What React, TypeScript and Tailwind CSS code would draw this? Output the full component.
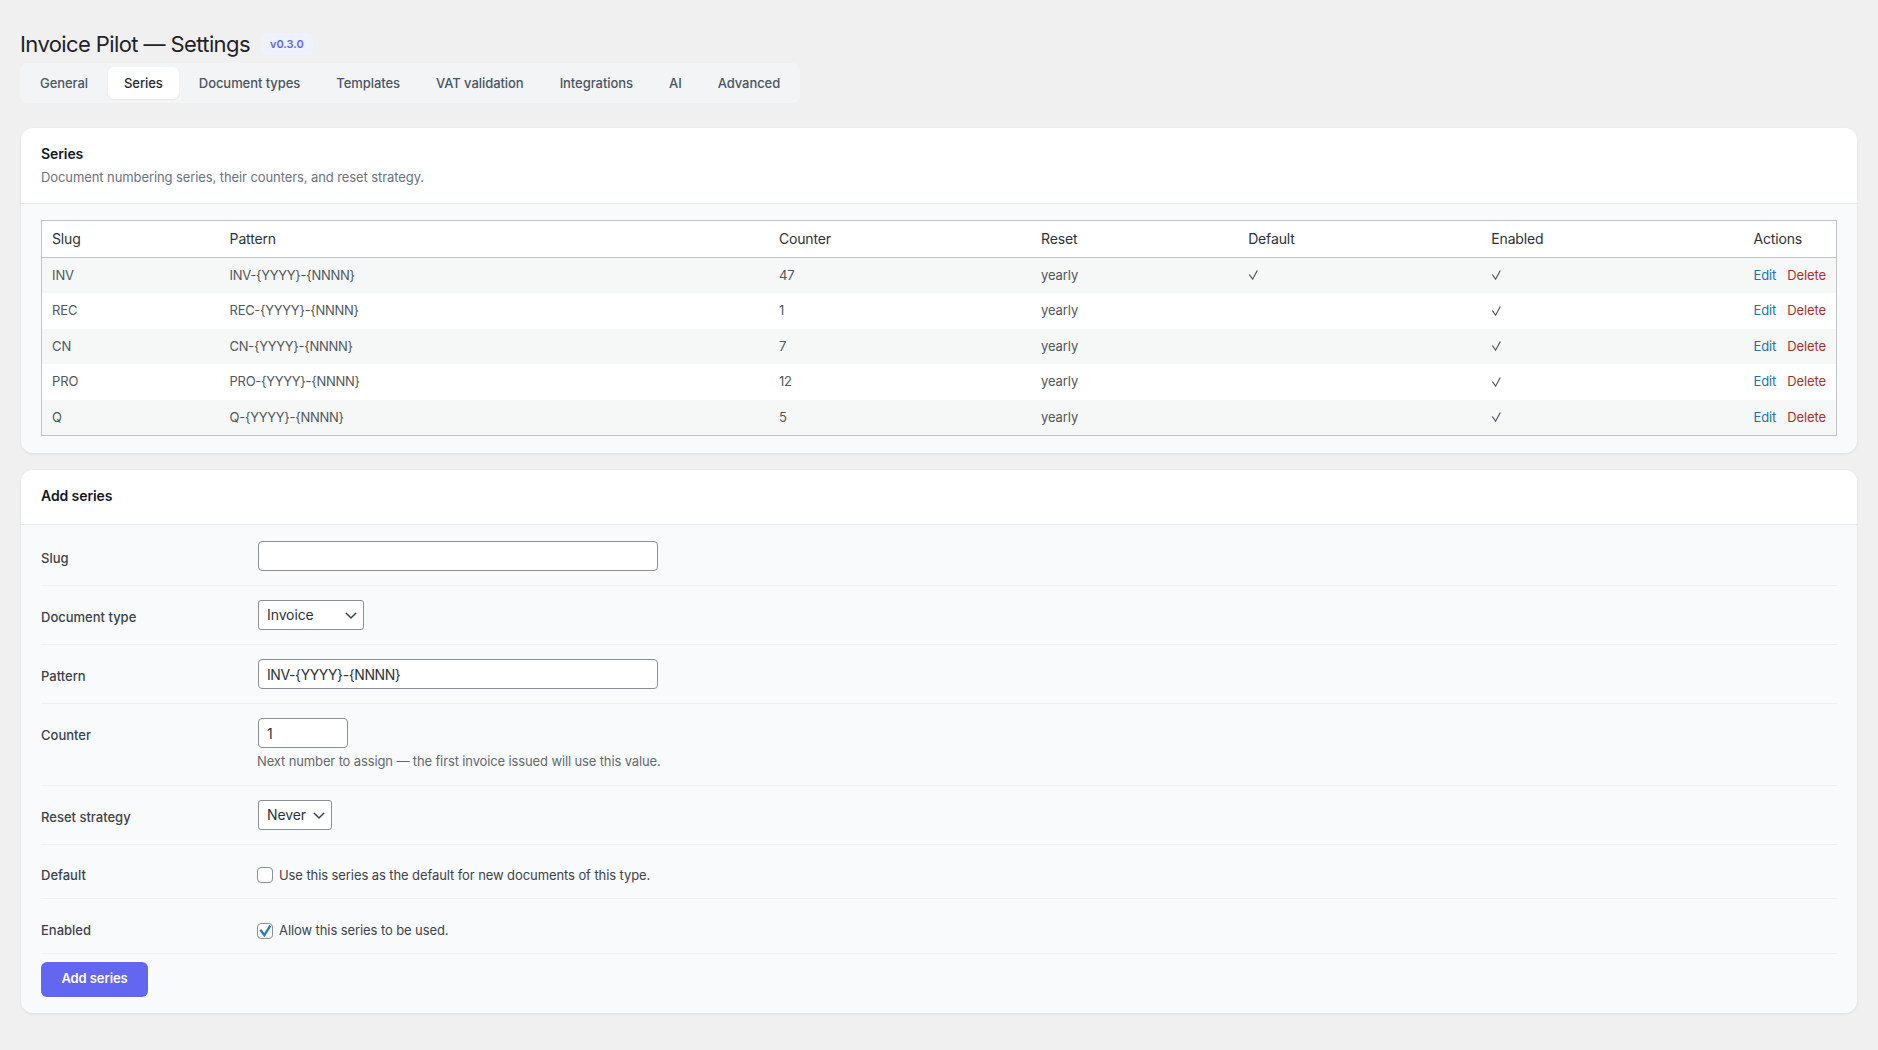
import React from "react";

const tabs = ["General", "Series", "Document types", "Templates", "VAT validation", "Integrations", "AI", "Advanced"];
const rows = [
  ["INV", "INV-{YYYY}-{NNNN}", "47", true],
  ["REC", "REC-{YYYY}-{NNNN}", "1", false],
  ["CN", "CN-{YYYY}-{NNNN}", "7", false],
  ["PRO", "PRO-{YYYY}-{NNNN}", "12", false],
  ["Q", "Q-{YYYY}-{NNNN}", "5", false],
] as const;

function Check() {
  return (
    <svg width="12" height="12" viewBox="0 0 12 12" fill="none" stroke="#50575e" strokeWidth="1.2" className="block">
      <path d="M1.3 5.5 L4.6 10.2 L9.3 1.5" />
    </svg>
  );
}

function Chevron() {
  return (
    <svg width="16" height="16" viewBox="0 0 16 16" fill="none" stroke="#3c434a" strokeWidth="1.5" className="absolute right-[5px] top-[7px] pointer-events-none">
      <path d="M3 6 L8 11 L13 6" />
    </svg>
  );
}

function Row({ label, children, pad = "py-[14px]" }: { label: string; children: React.ReactNode; pad?: string }) {
  return (
    <div className={"flex items-start border-b border-[#f0f0f1] " + pad}>
      <div className="w-[217px] shrink-0 pt-2 text-[13px] leading-[19.5px] font-medium tracking-normal text-[#3c434a]">{label}</div>
      <div className="min-w-0 flex-1">{children}</div>
    </div>
  );
}

function Select({ value, width }: { value: string; width: string }) {
  return (
    <div className={"relative h-[30px] " + width}>
      <select defaultValue={value} className="block h-[30px] w-full appearance-none rounded-[3px] border border-[#8c8f94] bg-white pb-px pl-2 pr-6 text-[14px] tracking-[-0.1px] text-[#2c3338] outline-none">
        <option>{value}</option>
      </select>
      <Chevron />
    </div>
  );
}

export default function App() {
  return (
    <div className="min-h-[1050px] bg-[#f0f0f1] px-5 pt-[29px] text-[13px] tracking-[-0.09px] text-[#3c434a] [font-family:Inter,'Liberation_Sans',sans-serif]">
      <div className="flex items-center gap-[11px]">
        <h1 className="text-[22px] leading-[30px] font-normal tracking-[-0.6px] text-[#1d2327]">Invoice Pilot — Settings</h1>
        <span className="flex h-[22px] items-center rounded-md bg-[#eef2ff] px-[9px] text-[11px] font-semibold tracking-normal text-[#6366f1]">v0.3.0</span>
      </div>

      <div className="mt-[4px] flex h-10 w-[780px] items-center gap-1 rounded-lg bg-[#f3f4f6] p-1">
        {tabs.map((t) => (
          <div
            key={t}
            className={
              "flex h-8 items-center rounded-md px-4 pt-[2px] text-[13px] font-medium tracking-[-0.06px] whitespace-nowrap " +
              (t === "Series" ? "bg-white text-[#1f2937] shadow-[0_1px_2px_rgba(0,0,0,0.05)]" : "text-[#4b5563]")
            }
          >
            {t}
          </div>
        ))}
      </div>

      <section className="mx-px mt-[25px] overflow-hidden rounded-xl bg-[#f9fafb] shadow-[0_1px_3px_rgba(0,0,0,0.08)]">
        <header className="h-[76px] border-b border-[#e5e7eb] bg-white px-5 pt-[16px]">
          <h2 className="text-[14px] leading-5 font-semibold text-[#111827]">Series</h2>
          <p className="mt-[3px] text-[13px] leading-5 text-[#6b7280]">Document numbering series, their counters, and reset strategy.</p>
        </header>
        <div className="px-5 pt-[16px] pb-[17px]">
          <table className="w-full table-fixed border-collapse border border-[#c3c4c7] bg-white">
            <colgroup>
              <col className="w-[178px]" />
              <col className="w-[549px]" />
              <col className="w-[262px]" />
              <col className="w-[207px]" />
              <col className="w-[243px]" />
              <col className="w-[262px]" />
              <col className="w-[93px]" />
            </colgroup>
            <thead>
              <tr className="border-b border-[#c3c4c7]">
                {["Slug", "Pattern", "Counter", "Reset", "Default", "Enabled", "Actions"].map((h) => (
                  <th key={h} className="px-[10px] py-2 text-left text-[14px] leading-[19.6px] font-normal tracking-[-0.15px] text-[#2c3338]">{h}</th>
                ))}
              </tr>
            </thead>
            <tbody>
              {rows.map((r, i) => (
                <tr key={r[0]} className={i % 2 === 0 ? "bg-[#f6f7f7]" : "bg-white"}>
                  <td className="px-[10px] py-2 text-[13px] leading-[19.5px] text-[#50575e]">{r[0]}</td>
                  <td className="px-[10px] py-2 text-[13px] leading-[19.5px] tracking-[-0.3px] text-[#50575e]">{r[1]}</td>
                  <td className="px-[10px] py-2 text-[13px] leading-[19.5px] text-[#50575e]">{r[2]}</td>
                  <td className="px-[10px] py-2 text-[13px] leading-[19.5px] text-[#50575e]">yearly</td>
                  <td className="px-[10px] py-2">{r[3] ? <Check /> : null}</td>
                  <td className="px-[10px] py-2"><Check /></td>
                  <td className="px-[10px] py-2 text-[13px] leading-[19.5px]">
                    <span className="flex gap-[11px]">
                      <a className="text-[#2271b1]">Edit</a>
                      <a className="text-[#b32d2e]">Delete</a>
                    </span>
                  </td>
                </tr>
              ))}
            </tbody>
          </table>
        </div>
      </section>

      <section className="mx-px mt-[17px] overflow-hidden rounded-xl bg-[#f9fafb] shadow-[0_1px_3px_rgba(0,0,0,0.08)]">
        <header className="flex h-[55px] items-center border-b border-[#e5e7eb] bg-white px-5">
          <h2 className="-translate-y-px text-[14px] leading-5 font-semibold text-[#111827]">Add series</h2>
        </header>
        <div className="px-5 pt-[2px] pb-4">
          <Row label="Slug">
            <input className="block h-[30px] w-[400px] rounded-[4px] border border-[#8c8f94] bg-white px-2 text-[14px] text-[#2c3338] outline-none" defaultValue="" />
          </Row>
          <Row label="Document type"><Select value="Invoice" width="w-[106px]" /></Row>
          <Row label="Pattern">
            <input className="block h-[30px] w-[400px] rounded-[4px] border border-[#8c8f94] bg-white px-2 text-[14px] tracking-[-0.4px] text-[#2c3338] outline-none" defaultValue="INV-{YYYY}-{NNNN}" />
          </Row>
          <Row label="Counter" pad="pt-[14px] pb-[13px]">
            <input className="block h-[30px] w-[90px] rounded-[4px] border border-[#8c8f94] bg-white px-2 text-[14px] text-[#2c3338] outline-none" defaultValue="1" />
            <p className="mt-[4px] -ml-px text-[13px] leading-[19.5px] tracking-[-0.13px] text-[#646970]">Next number to assign — the first invoice issued will use this value.</p>
          </Row>
          <Row label="Reset strategy"><Select value="Never" width="w-[74px]" /></Row>
          <Row label="Default" pad="py-[13px]">
            <label className="-ml-px flex h-[19.5px] translate-y-2 items-center gap-[6px] text-[13px] text-[#3c434a]">
              <span className="h-4 w-4 rounded-[4px] border border-[#8c8f94] bg-white" />
              Use this series as the default for new documents of this type.
            </label>
          </Row>
          <Row label="Enabled" pad="pt-[14px] pb-[12px]">
            <label className="-ml-px flex h-[19.5px] translate-y-2 items-center gap-[6px] text-[13px] text-[#3c434a]">
              <span className="relative h-4 w-4 rounded-[4px] border border-[#8c8f94] bg-white">
                <svg width="16" height="16" viewBox="0 0 16 16" fill="none" stroke="#2b7bc0" strokeWidth="2.4" className="absolute -left-px -top-px">
                  <path d="M3.3 6.7 L7.4 12.2 L13.3 2.7" />
                </svg>
              </span>
              Allow this series to be used.
            </label>
          </Row>
          <button className="mt-[8px] block h-[35px] w-[107px] rounded-md bg-[#6366f1] text-[13px] font-semibold text-white">Add series</button>
        </div>
      </section>
    </div>
  );
}
